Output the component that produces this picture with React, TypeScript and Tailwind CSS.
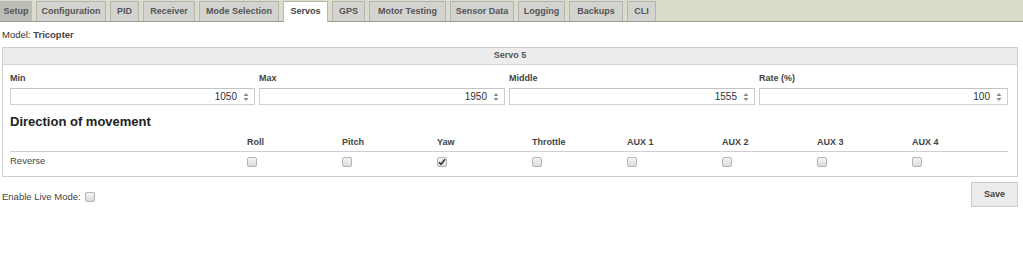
const tabs = [
  { name: "Setup", w: "w-[32px]", style: "bg-[#bdbdb8] border-[#bdbdb8]" },
  { name: "Configuration", w: "w-[70px]", style: "" },
  { name: "PID", w: "w-[29px]", style: "" },
  { name: "Receiver", w: "w-[52px]", style: "" },
  { name: "Mode Selection", w: "w-[80px]", style: "" },
  { name: "Servos", w: "w-[45px]", style: "active" },
  { name: "GPS", w: "w-[33px]", style: "" },
  { name: "Motor Testing", w: "w-[77px]", style: "" },
  { name: "Sensor Data", w: "w-[64px]", style: "" },
  { name: "Logging", w: "w-[47px]", style: "" },
  { name: "Backups", w: "w-[54px]", style: "" },
  { name: "CLI", w: "w-[29px]", style: "" },
];

const fields = [
  { label: "Min", value: "1050" },
  { label: "Max", value: "1950" },
  { label: "Middle", value: "1555" },
  { label: "Rate (%)", value: "100" },
];

const channels = ["Roll", "Pitch", "Yaw", "Throttle", "AUX 1", "AUX 2", "AUX 3", "AUX 4"];

function Spinner() {
  return (
    <svg width="6" height="10" viewBox="0 0 6 10" className="ml-[6px]">
      <path d="M3 1 L5.5 4 L0.5 4 Z" fill="#8a8a8a" />
      <path d="M3 9 L5.5 6 L0.5 6 Z" fill="#8a8a8a" />
    </svg>
  );
}

function Box({ checked }: { checked?: boolean }) {
  return (
    <div className="w-[10px] h-[10px] border border-[#b4b4b4] rounded-[2px] bg-gradient-to-b from-[#f4f4f4] to-[#dcdcdc] flex items-center justify-center">
      {checked && (
        <svg width="8" height="8" viewBox="0 0 8 8">
          <path d="M1 4.2 L3 6.3 L7 1.2" fill="none" stroke="#333" strokeWidth="1.6" />
        </svg>
      )}
    </div>
  );
}

export default function App() {
  return (
    <div className="w-[1023px] h-[264px] bg-white text-[#333] font-['Liberation_Sans',Arial,sans-serif] overflow-hidden">
      {/* tab strip */}
      <div className="h-[22px] bg-[#dcdccd] border-b border-[#9c9c8e] flex items-end gap-[4px]">
        {tabs.map((t) =>
          t.style === "active" ? (
            <div
              key={t.name}
              className={`${t.w} h-[21px] -mb-px bg-white border border-b-0 border-[#b8b8b0] flex items-center justify-center text-[9px] font-bold text-[#444]`}
            >
              {t.name}
            </div>
          ) : (
            <div
              key={t.name}
              className={`${t.w} h-[20px] border border-b-0 flex items-center justify-center text-[9px] font-bold text-[#555] ${
                t.style || "bg-[#d3d3d0] border-[#b5b5b0]"
              }`}
            >
              {t.name}
            </div>
          )
        )}
      </div>

      <div className="pl-[2px] pt-[6px] h-[25px] text-[9.5px] text-[#333]">
        Model: <span className="font-bold text-[#444]">Tricopter</span>
      </div>

      {/* servo panel */}
      <div className="ml-[2px] w-[1016px] border border-[#cfcfcf]">
        <div className="h-[17px] bg-[#ececec] border-b border-[#d6d6d6] flex items-center justify-center text-[9px] font-bold text-[#555]">
          Servo 5
        </div>
        <div className="px-[7px] pb-[5px]">
          <div className="grid grid-cols-[245px_246px_246px_249px] gap-x-[4px] pt-[7px]">
            {fields.map((f) => (
              <div key={f.label}>
                <div className="h-[12px] text-[9px] font-bold text-[#444] leading-[12px]">{f.label}</div>
                <div className="mt-[4px] h-[17px] border border-[#d0d0d0] border-t-[#c4c4c4] flex items-center justify-end pr-[5px] text-[10px] text-[#333]">
                  {f.value}
                  <Spinner />
                </div>
              </div>
            ))}
          </div>

          <div className="mt-[9px] h-[16px] text-[13px] font-bold text-[#222] leading-[16px]">Direction of movement</div>

          <div className="w-[998px] mt-[5px]">
            <div className="flex h-[17px] items-center border-b border-[#cfcfcf] text-[9px] font-bold text-[#444]">
              <div className="w-[237px]" />
              {channels.map((c) => (
                <div key={c} className="w-[95px]">
                  {c}
                </div>
              ))}
            </div>
            <div className="flex h-[19px] items-center text-[9.5px] text-[#444]">
              <div className="w-[237px]">Reverse</div>
              {channels.map((c) => (
                <div key={c} className="w-[95px]">
                  <Box checked={c === "Yaw"} />
                </div>
              ))}
            </div>
          </div>
        </div>
      </div>

      <div className="flex items-start justify-between pl-[2px] pr-[5px] pt-[5px]">
        <div className="flex items-center gap-[4px] mt-[8px] text-[9.5px] text-[#444]">
          Enable Live Mode:
          <Box />
        </div>
        <div className="w-[47px] h-[25px] bg-[#ececec] border border-[#cdcdcd] flex items-center justify-center text-[9px] font-bold text-[#444]">
          Save
        </div>
      </div>
    </div>
  );
}
